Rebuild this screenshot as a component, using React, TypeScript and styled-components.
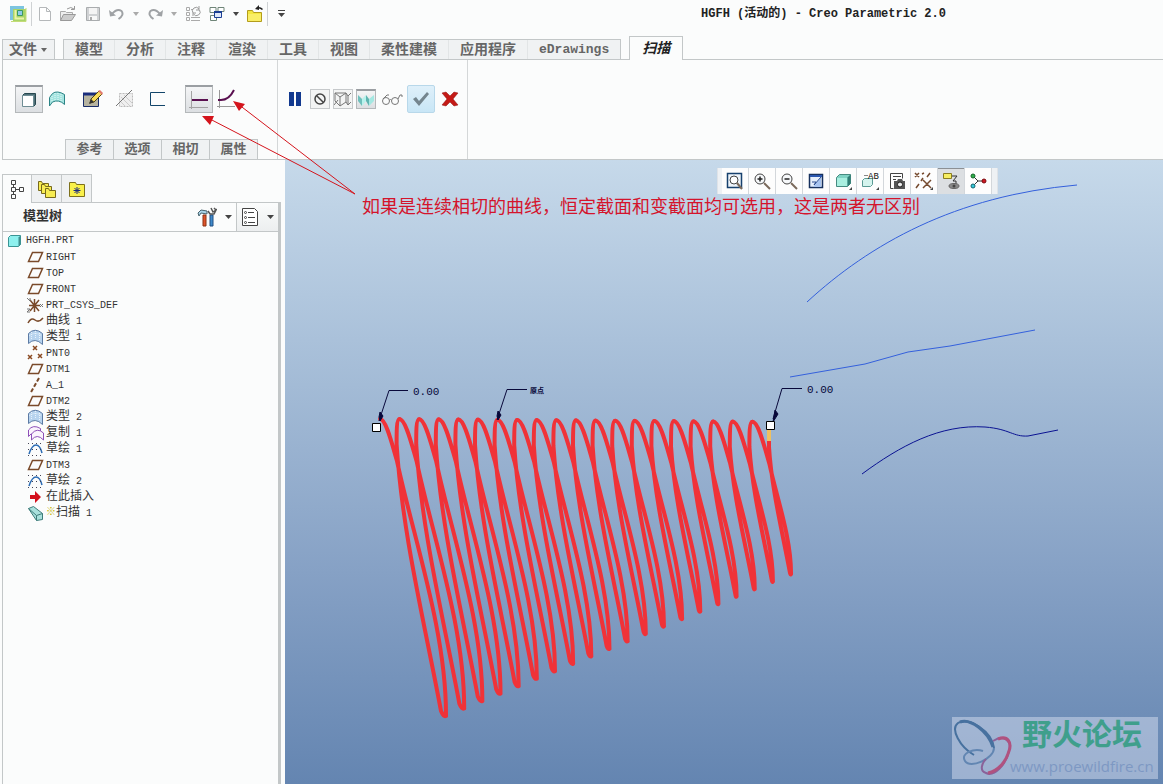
import React from "react";
import styled, { createGlobalStyle, css } from "styled-components";

const GlobalStyle = createGlobalStyle`
  *, *::before, *::after { box-sizing: border-box; }
  body {
    margin: 0;
    background: #fbfcfc;
    color: #333;
    font-family: "Liberation Mono", "Noto Sans CJK SC", monospace;
    font-size: 12px;
    line-height: 16px;
  }
  button { font: inherit; color: inherit; cursor: default; }
  svg { display: block; flex: none; }
`;

const line = "#c3c7c8";

const Page = styled.div`
  position: relative;
  display: flex;
  flex-direction: column;
  min-height: 100vh;
`;

/* ---------- title bar ---------- */
const TitleBar = styled.header`
  display: flex;
  align-items: center;
  height: 28px;
  padding-left: 8px;
`;
const QuickButton = styled.button<{ $w: number }>`
  display: flex;
  align-items: center;
  justify-content: center;
  width: ${(p) => p.$w}px;
  height: 24px;
  padding: 0;
  border: 0;
  background: none;
`;
const QuickRule = styled.span<{ $gap?: number }>`
  width: 1px;
  height: 24px;
  margin: 0 ${(p) => p.$gap ?? 0}px;
  background: #cfd2d4;
`;
const Title = styled.h1`
  flex: 1;
  margin: 0;
  padding-left: 190px;
  text-align: center;
  font-size: 12px;
  line-height: 16px;
  font-weight: bold;
  color: #222;
  white-space: nowrap;
`;

/* ---------- ribbon tabs ---------- */
const TabBar = styled.nav`
  display: flex;
  align-items: flex-end;
  height: 24px;
  margin: 8px 0 0 2px;
  border-bottom: 1px solid ${line};
`;
const tabFace = css`
  border: 1px solid ${line};
  background: #f0f2f3;
  color: #666;
  font-weight: bold;
`;
const FileTab = styled.button`
  ${tabFace}
  display: flex;
  align-items: center;
  gap: 4px;
  height: 20px;
  width: 53px;
  margin-right: 8px;
  padding: 0 6px;
  border-bottom: 0;
  font-size: 14px;
  white-space: nowrap;
`;
const TabGroup = styled.div`
  ${tabFace}
  display: flex;
  height: 20px;
  border-bottom: 0;
`;
const Tab = styled.button`
  height: 19px;
  padding: 0 11px;
  border: 0;
  border-right: 1px solid #e2e5e6;
  background: none;
  font-size: 14px;
  line-height: 20px;
  white-space: nowrap;
  &:last-child { border-right: 0; font-size: 13px; }
`;
const ActiveTab = styled.button`
  height: 24px;
  width: 54px;
  margin: 0 0 -1px 8px;
  padding: 0;
  border: 1px solid ${line};
  border-bottom: 0;
  background: #fbfcfc;
  color: #222;
  font-size: 14px;
  font-weight: bold;
  font-style: italic;
`;

/* ---------- ribbon ---------- */
const Ribbon = styled.section`
  display: flex;
  height: 100px;
  margin-left: 2px;
  border-left: 1px solid ${line};
  border-bottom: 1px solid ${line};
`;
const RibbonGroup = styled.div<{ $w: number }>`
  display: flex;
  flex-direction: column;
  justify-content: space-between;
  width: ${(p) => p.$w}px;
  padding-top: 25px;
  border-right: 1px solid #d4d7d8;
`;
const ToolRow = styled.div<{ $start: number }>`
  display: flex;
  align-items: center;
  height: 28px;
  padding-left: ${(p) => p.$start}px;
`;
const Tool = styled.button<{ $face?: "pressed" | "hot" | "flat"; $size?: number; $gap?: number }>`
  display: flex;
  align-items: center;
  justify-content: center;
  width: ${(p) => p.$size ?? 28}px;
  height: ${(p) => p.$size ?? 28}px;
  margin-left: ${(p) => p.$gap ?? 0}px;
  padding: 0;
  border: 0;
  background: none;
  ${(p) => p.$face === "pressed" && css`
    border: 1px solid #b4b8ba;
    border-top: 2px solid #9a9ea2;
    background: linear-gradient(#f4f5f6, #dcdfe2);
  `}
  ${(p) => p.$face === "hot" && css`
    border: 1px solid #b8d8ea;
    border-radius: 2px;
    background: linear-gradient(#dff0fa, #c8e6f6);
  `}
  ${(p) => p.$face === "flat" && css`
    border: 1px solid #c6c9cb;
    background: #f3f4f4;
  `}
`;
const SubTabs = styled.div`
  display: flex;
  padding-left: 62px;
`;
const SubTab = styled.button`
  ${tabFace}
  width: 49px;
  height: 20px;
  margin-right: -1px;
  padding: 0;
  border-bottom: 0;
  font-size: 13px;
  line-height: 19px;
`;

/* ---------- work area ---------- */
const Work = styled.div`
  display: flex;
  flex: 1;
`;
const Side = styled.aside`
  display: flex;
  flex-direction: column;
  width: 285px;
  padding: 14px 4px 0 2px;
`;
const SideTabs = styled.div`
  display: flex;
  height: 28px;
`;
const SideTab = styled.button<{ $on?: boolean }>`
  display: flex;
  align-items: center;
  justify-content: center;
  width: 30px;
  height: ${(p) => (p.$on ? 29 : 28)}px;
  padding: 0;
  border: 1px solid ${line};
  border-bottom: 0;
  border-left-width: ${(p) => (p.$on ? 1 : 0)}px;
  background: ${(p) => (p.$on ? "#fbfcfc" : "#eff1f2")};
  z-index: 1;
`;
const SidePanel = styled.div`
  flex: 1;
  border: 1px solid ${line};
  border-right: 3px solid #c3c7c8;
  border-bottom: 0;
`;
const SideHead = styled.div`
  display: flex;
  align-items: center;
  height: 29px;
  border-bottom: 1px solid ${line};
`;
const SideTitle = styled.h2`
  flex: 1;
  margin: 0;
  padding-left: 20px;
  font-size: 13px;
  line-height: 16px;
  color: #333;
`;
const HeadButton = styled.button<{ $framed?: boolean }>`
  display: flex;
  align-items: center;
  gap: 8px;
  height: 28px;
  padding: 0 4px;
  border: 0;
  background: none;
  ${(p) => p.$framed && css`
    border-left: 1px solid ${line};
    background: linear-gradient(#fbfcfc, #eceeef);
  `}
`;
const Tree = styled.ul`
  margin: 0;
  padding: 1px 0 0;
  list-style: none;
`;
const Node = styled.li<{ $root?: boolean }>`
  display: flex;
  align-items: center;
  gap: 1px;
  height: 16px;
  padding-left: ${(p) => (p.$root ? 4 : 24)}px;
  color: #333;
  white-space: pre;
`;
const Latin = styled.span`
  font-size: 10px;
`;
const Mark = styled.span`
  width: 9px;
  font-size: 10px;
  font-weight: bold;
  color: #c4b400;
`;

/* ---------- graphics window ---------- */
const Viewport = styled.main`
  position: relative;
  flex: 1;
  overflow: hidden;
  background: linear-gradient(#c6d9ea 0%, #a3bbd6 36%, #86a1c5 66%, #6485b1 100%);
`;
const Drawing = styled.svg`
  position: absolute;
  left: 0;
  top: 0;
`;
const ViewBar = styled.div`
  position: absolute;
  left: 432px;
  top: 8px;
  display: flex;
  height: 26px;
  padding: 0 5px 0 4px;
  background: #eef1f4;
  border: 1px solid #dfe3e8;
  border-width: 0 1px;
`;
const ViewButton = styled.button<{ $on?: boolean }>`
  display: flex;
  align-items: center;
  justify-content: center;
  width: 27px;
  padding: 0;
  border: 0;
  border-right: 1px solid #d3d7db;
  background: ${(p) => (p.$on ? "#dcdfe2" : "#fdfdfd")};
  box-shadow: ${(p) => (p.$on ? "inset 0 1px 0 #8c9094" : "none")};
`;
const Note = styled.p`
  position: absolute;
  left: 77px;
  top: 36px;
  margin: 0;
  font-size: 18px;
  line-height: 24px;
  color: #d4142c;
  white-space: nowrap;
`;
const Watermark = styled.div`
  position: absolute;
  right: 5px;
  bottom: 5px;
  display: flex;
  width: 206px;
  height: 62px;
  background: rgba(214, 222, 240, 0.5);
`;
const MarkText = styled.div`
  margin-left: -2px;
  white-space: nowrap;
`;
const MarkName = styled.div`
  padding-left: 12px;
  font-size: 30px;
  line-height: 40px;
  font-weight: bold;
  color: #3f9f8c;
`;
const MarkUrl = styled.div`
  font-family: "Open Sans", sans-serif;
  font-size: 15px;
  line-height: 18px;
  color: #7d98c3;
`;
const Leaders = styled.svg`
  position: absolute;
  left: 0;
  top: 0;
  pointer-events: none;
`;

/* ---------- icons ---------- */
type IconProps = { w?: number; h?: number; children: React.ReactNode };
const Icon = ({ w = 18, h = 18, children }: IconProps) => (
  <svg width={w} height={h} viewBox={`0 0 ${w} ${h}`} fill="none" aria-hidden="true">{children}</svg>
);
const Caret = ({ color = "#444", w = 7 }: { color?: string; w?: number }) => (
  <Icon w={w} h={4}><path d={`M0 0H${w}L${w / 2} 4Z`} fill={color} /></Icon>
);

const AppIcon = () => (
  <Icon>
    <rect x="1" y="1" width="14" height="14" fill="#6db8dc" />
    <path d="M4 4h13v13H4z" fill="#a8d468" />
    <path d="M1 1h14v3H4v11H1z" fill="#7cc4e0" />
    <path d="M6.500 5v8.500H15" stroke="#eaf3a8" strokeWidth="2" />
    <path d="M8.500 5.500h5v5h-5z" fill="#8fc8e8" stroke="#3a9a60" />
    <path d="M2 16.500h15V3" stroke="#c4dc78" />
  </Icon>
);
const NewIcon = () => (
  <Icon w={14} h={16}><path d="M1.500 1.500h7l4 4v9h-11zM8.500 1.500v4h4" fill="#fff" stroke="#b5b8ba" /></Icon>
);
const OpenIcon = () => (
  <Icon>
    <path d="M1.500 15.500v-9h5l1 1h6v2" fill="#eee" stroke="#aaa" />
    <path d="M1.500 15.500l3-6h12l-4 6z" fill="#ccc" stroke="#999" />
    <path d="M8 4q4-3 7 0M15.500 1v3.500H12" stroke="#999" />
  </Icon>
);
const SaveIcon = () => (
  <Icon w={16} h={16}>
    <path d="M1.500 1.500h13v13h-13z" fill="#d0d2d4" stroke="#a9acae" />
    <path d="M4 2h8v6H4z" fill="#f4f4f4" /><path d="M4 10h8v4H4z" fill="#f8f8f8" /><path d="M5 11h2v3H5z" fill="#aaa" />
  </Icon>
);
const UndoIcon = ({ flip }: { flip?: boolean }) => (
  <Icon w={16} h={14}>
    <g transform={flip ? "matrix(-1 0 0 1 16 0)" : undefined}>
      <path d="M3 7Q8 1 12.500 4Q15.500 8 9.500 12" stroke="#9fa2a5" strokeWidth="2" />
      <path d="M0 3l1 6.500 6-1z" fill="#9fa2a5" />
    </g>
  </Icon>
);
const RegenIcon = () => (
  <Icon w={16} h={16}>
    <path d="M1.500 1.500h3v3h-3zM1.500 6.500h3v3h-3zM1.500 11.500h3v3h-3zM6 11.500h9M6 14.500h9M6 3.500h2" stroke="#aaa" />
    <path d="M8 7a3.500 3.500 0 0 1 6-4M14.500 4a3.500 3.500 0 0 1-6 4M14 0v4h-3M8 10V7h3" stroke="#999" />
  </Icon>
);
const WindowsIcon = () => (
  <Icon w={16} h={16}>
    <path d="M1 1.500h6v5H1zM9 1.500h6v4H9zM1.500 9.500h6v5h-6z" fill="#fff" stroke="#6f8578" />
    <path d="M5.500 5.500h7v6h-7z" fill="#dfe8fa" stroke="#1c3f94" />
    <path d="M5 6h8" stroke="#1c3f94" strokeWidth="2" />
  </Icon>
);
const CloseFolderIcon = () => (
  <Icon>
    <path d="M1.500 5.500h5l1 2h8v9h-14z" fill="#f3e63e" stroke="#b39c1c" />
    <path d="M2 9h13v7H2z" fill="#f9ee66" />
    <path d="M10.500 3.500q3-2 6 1" stroke="#222" strokeWidth="1.500" />
    <path d="M9 4l4-4v5z" fill="#222" />
  </Icon>
);
const OptionsIcon = () => (
  <Icon w={9} h={8}><path d="M1 .5h7" stroke="#444" /><path d="M1 3h7L4.500 7z" fill="#444" /></Icon>
);

const SolidIcon = () => (
  <Icon>
    <path d="M2.500 4.500l2-2h11v11l-2 2" fill="#4e7078" stroke="#284850" />
    <path d="M2.500 4.500h11v11h-11z" fill="#fff" stroke="#6f8d94" />
  </Icon>
);
const SurfaceIcon = () => (
  <Icon>
    <path d="M4.500 3.500Q9 0 16.500 4.500V14.500Q11 9 4.500 12L1.500 16V7.500Z" fill="#a5e4e0" stroke="#2c8486" />
    <path d="M4 6v6M7 3v8M10 3v8M13 4v8" stroke="#e6fbf8" strokeDasharray="1 1" />
  </Icon>
);
const SketchIcon = () => (
  <Icon w={22} h={20}>
    <path d="M1.500 4.500h15v13h-15z" fill="#b6b3a0" stroke="#182c68" /><path d="M1 5h16" stroke="#1a2d7c" strokeWidth="3" />
    <path d="M8 14l1-4 8-8 3 3-8 8z" fill="#f6da5a" stroke="#51430f" /><path d="M7 15l2-5 3 3z" fill="#333" />
    <path d="M16 2l2-1 3 3-1 2z" fill="#e27a6e" />
  </Icon>
);
const RemoveIcon = () => (
  <Icon w={20} h={20}>
    <path d="M4.500 4.500h13v13h-13z" stroke="#bbb" fill="#efefef" strokeDasharray="2 1" />
    <path d="M6 8l9 9M9 6l8 8M5 12l5 5" stroke="#ccc" /><path d="M1 17L17 1" stroke="#777" />
  </Icon>
);
const ThinIcon = () => (
  <Icon w={18} h={18}><path d="M17 2.500H2.500v13H17" stroke="#12456a" /></Icon>
);
const ConstIcon = () => (
  <Icon w={20} h={20}><path d="M2.500 1v18M0 17.500h19" stroke="#a3a3a3" /><path d="M3 10h16" stroke="#5a1050" strokeWidth="2" /></Icon>
);
const VarIcon = () => (
  <Icon w={20} h={20}><path d="M2.500 1v18M0 17.500h18" stroke="#999" /><path d="M1 11h3Q12 11 17 1" stroke="#5a1050" strokeWidth="2" /></Icon>
);
const PauseIcon = () => (
  <Icon w={12} h={14}><path d="M0 0h5v14H0zM7 0h5v14H7z" fill="#12398f" /></Icon>
);
const NoPreviewIcon = () => (
  <Icon w={14} h={14}><circle cx="7" cy="7" r="5" stroke="#444" strokeWidth="1.500" /><path d="M3.500 3.500l7 7" stroke="#444" strokeWidth="1.500" /></Icon>
);
const WireIcon = () => (
  <Icon>
    <path d="M1 3l5 4v9L1 11zM6 7l6-4v9l-6 4M12 3l2 3 3-3M14 6v9l3-3M12 12l2 3M1 3h11M0 15l4-5" stroke="#777" />
  </Icon>
);
const ShadeIcon = () => (
  <Icon>
    <path d="M1 4l4 4v7l-4-5z" fill="#6fc0bc" /><path d="M5 8l4-4v6l-4 5z" fill="#b8f2ec" />
    <path d="M9 4l3 4v7l-3-5z" fill="#5fb4b0" /><path d="M12 8l5-4v6l-5 5z" fill="#a4e8e2" />
  </Icon>
);
const GlassesIcon = () => (
  <Icon w={22} h={14}>
    <circle cx="5" cy="9" r="3.500" stroke="#777" /><circle cx="14" cy="9" r="3.500" stroke="#777" />
    <path d="M8.500 8q1-1 2 0M2 7l4-4 2 0M17 7l2-4h2v2" stroke="#777" />
  </Icon>
);
const CheckIcon = () => (
  <Icon w={20} h={18}><path d="M2 9l3-2 3 4 8-9 2 2L8 16z" fill="#74858e" /></Icon>
);
const CrossIcon = () => (
  <Icon w={18} h={18}><path d="M1 3l4-1 4 4 4-4 4 1-5 6 5 6-4 1-4-4-4 4-4-1 5-6z" fill="#c41a16" stroke="#8f120e" strokeWidth=".5" /></Icon>
);

const TreeTabIcon = () => (
  <Icon w={16} h={20}><path d="M2.500 1.500h4v4h-4zM2.500 8.500h4v4h-4zM2.500 15.500h4v4h-4zM10.500 8.500h4v4h-4zM4.500 5.500v3M4.500 12.500v3M6.500 10.500h4" stroke="#444" /></Icon>
);
const FoldersIcon = () => (
  <Icon w={20} h={20}>
    {[0, 3, 7].map((o) => (
      <path key={o} d={`M${o + 1.5} ${o + 2.5}h3l1 2h6v7h-10z`} fill="#f7ec52" stroke="#77691c" />
    ))}
  </Icon>
);
const FavIcon = () => (
  <Icon w={18} h={16}>
    <path d="M1.500 1.500h6l1 2h8v12h-15z" fill="#f9f04a" stroke="#7d701c" />
    <path d="M9 6v7M5.500 9.500h7M6.500 7l5 5M11.500 7l-5 5" stroke="#1a2a80" />
  </Icon>
);
const ToolsIcon = () => (
  <Icon w={20} h={20}>
    <path d="M1 6l3-3 6 1v3L4 6 2 9z" fill="#a9d4e8" stroke="#47636e" />
    <path d="M6 8h3v11H6z" fill="#e0542a" stroke="#8b3012" />
    <path d="M13 8h3v11h-3z" fill="#3e8acb" stroke="#224f80" />
    <path d="M11 4l2 3h4l2-4-3 2-2-4M17 1l2 2" stroke="#555" strokeWidth="1.500" />
  </Icon>
);
const ListIcon = () => (
  <Icon w={18} h={20}>
    <path d="M1.500 1.500h12l3 3v14h-15z" fill="#fff" stroke="#444" />
    <path d="M7 5.500h6M7 10.500h7M7 15.500h7" stroke="#444" />
    <circle cx="4.500" cy="5.500" r="1" stroke="#444" /><circle cx="4.500" cy="10.500" r="1" stroke="#444" /><circle cx="4.500" cy="15.500" r="1" stroke="#444" />
  </Icon>
);

type Kind = "part" | "plane" | "csys" | "curve" | "surf" | "points" | "axis" | "copy" | "sketch" | "insert" | "sweep";
const nodeArt: Record<Kind, React.ReactNode> = {
  part: (<><path d="M1.500 4.500l2-2h10v9l-2 2h-10z" fill="#8df0ee" stroke="#3a9494" /><path d="M11.500 4.500l2-2v9l-2 2z" fill="#3f8f90" /></>),
  plane: <path d="M5.500 3.500h10l-4 9h-10z" stroke="#7a4a2a" strokeWidth="1.500" />,
  csys: (<><path d="M2 8.500h11M7.500 2v13M3 3l9 11M12 3L3 14" stroke="#7a4a2a" strokeWidth="1.500" /><path d="M0 1l3 3M3 1v3M13 7l3 3M16 7l-3 3M0 12h3l-3 3h3" stroke="#777" /></>),
  curve: <path d="M1 10Q4 4 8 7t8-2" stroke="#7a4a2a" strokeWidth="1.500" />,
  surf: (<><path d="M1.500 4.500Q8-2 15.500 4.500V15.500Q8 8 1.500 14.500z" fill="#b7d3ee" stroke="#5c7ba4" /><path d="M4.500 3v8M8.500 2v8M12.500 4v8M2 7q6-5 13 0" stroke="#e9f3fc" strokeDasharray="1 1" /></>),
  points: <path d="M6 1l4 4M10 1L6 5M1 10l4 4M5 10l-4 4M11 9l4 4M15 9l-4 4" stroke="#8a4a22" strokeWidth="1.500" />,
  axis: <path d="M12 1L4 15" stroke="#7a4a2a" strokeWidth="2" strokeDasharray="4 2" />,
  copy: (<><path d="M1.500 11.500V5Q6-1 13.500 3.500V6" stroke="#8d50b8" fill="#faf4fd" /><path d="M1.500 11.500l3-3M4.500 15V9Q10 2 16.500 8v7Q10 8 4.500 15z" stroke="#8d50b8" fill="#faf4fd" /></>),
  sketch: (<><path d="M2 13Q5 4 9 4t6 8" stroke="#2c6cb4" strokeWidth="1.500" /><path d="M1 2.500h15M1 8.500h15M1 14.500h15" stroke="#445" strokeDasharray="1 3" /></>),
  insert: <path d="M3 6h5V2l6 6-6 6v-4H3z" fill="#d3101c" />,
  sweep: (<><path d="M1.500 3.500l5-2 9 7v6l-6 1z" fill="#a9e0dc" stroke="#3d7c7a" /><path d="M1.500 3.500l8 7 6-2M9.500 10.500v5" stroke="#3d7c7a" /></>),
};
type Item = { kind: Kind; cjk?: string; latin?: string; mark?: boolean };
const items: Item[] = [
  { kind: "plane", latin: "RIGHT" },
  { kind: "plane", latin: "TOP" },
  { kind: "plane", latin: "FRONT" },
  { kind: "csys", latin: "PRT_CSYS_DEF" },
  { kind: "curve", cjk: "曲线", latin: " 1" },
  { kind: "surf", cjk: "类型", latin: " 1" },
  { kind: "points", latin: "PNT0" },
  { kind: "plane", latin: "DTM1" },
  { kind: "axis", latin: "A_1" },
  { kind: "plane", latin: "DTM2" },
  { kind: "surf", cjk: "类型", latin: " 2" },
  { kind: "copy", cjk: "复制", latin: " 1" },
  { kind: "sketch", cjk: "草绘", latin: " 1" },
  { kind: "plane", latin: "DTM3" },
  { kind: "sketch", cjk: "草绘", latin: " 2" },
  { kind: "insert", cjk: "在此插入" },
  { kind: "sweep", cjk: "扫描", latin: " 1", mark: true },
];

const Lens = ({ sign }: { sign?: string }) => (
  <Icon><circle cx="7" cy="7" r="5" stroke="#444" fill="#f6f8fa" /><path d="M11 11l6 6" stroke="#7a6a5c" strokeWidth="2" /><path d={sign} stroke="#222" strokeWidth="1.500" /></Icon>
);
const corner = <path d="M19 16v3h-3z" fill="#444" />;
const viewTools: { name: string; on?: boolean; art: React.ReactNode }[] = [
  { name: "重新调整", art: <Icon><path d="M1.500 1.500h14v14h-14z" stroke="#17416e" strokeWidth="1.500" fill="#eef4fa" /><circle cx="8" cy="8" r="4" stroke="#444" fill="#fff" /><path d="M11 11l5 6" stroke="#7a6a5c" strokeWidth="2" /></Icon> },
  { name: "放大", art: <Lens sign="M4.500 7h5M7 4.500v5" /> },
  { name: "缩小", art: <Lens sign="M4.500 7h5" /> },
  { name: "重画", art: <Icon w={16} h={16}><path d="M1.500 1.500h13v13h-13z" stroke="#17315e" strokeWidth="1.500" fill="#e6effc" /><path d="M2 3h12" stroke="#2a57b0" strokeWidth="2" /><path d="M5 14l8-10v10z" fill="#a8c4f0" /><path d="M4 9h4l-2 3 7-8" stroke="#2a4d90" /></Icon> },
  { name: "显示样式", art: <Icon w={20} h={20}><path d="M3.500 6.500l3-3h11v9l-3 3h-11z" fill="#7fd3c4" stroke="#468a80" /><path d="M4 7h10v8H4z" fill="#a9efe0" /><path d="M14.500 6.500l3-3v9l-3 3z" fill="#2f7d74" />{corner}</Icon> },
  { name: "已命名视图", art: <Icon w={20} h={20}><path d="M2.500 9.500l2-2h8v6l-2 2h-8z" fill="#d5f4ee" stroke="#5a9a94" /><path d="M4 4.500h4" stroke="#888" /><text x="8" y="8" fontSize="9" fontFamily="Liberation Mono" fill="#111">AB</text>{corner}</Icon> },
  { name: "视图管理器", art: <Icon><path d="M2.500 16.500v-15h12v5M2.500 16.500h3M5 4.500h8M5 7.500h3" stroke="#444" /><path d="M6 9h3l1-2h4l1 2h2v8H6z" fill="#555" /><circle cx="12" cy="12.500" r="2.500" fill="#eee" stroke="#222" /></Icon> },
  { name: "基准显示", art: <Icon w={20} h={20}><path d="M1 2l4 4M5 2L1 6M8 3l2-1M2 17l3-4M7 10l2-3M9 9l8 8M17 9l-8 8M13 6l3-4" stroke="#754a2e" strokeWidth="1.500" />{corner}</Icon> },
  { name: "注释显示", on: true, art: <Icon><path d="M1.500 1.500h8v5h-8z" fill="#f6ee62" stroke="#8a7d20" /><path d="M10 4h5l-4 5h3v3" stroke="#333" /><ellipse cx="12" cy="14" rx="5" ry="2.500" fill="#888" stroke="#666" /><circle cx="12" cy="14" r="1.500" fill="#444" /></Icon> },
  { name: "旋转中心", art: <Icon><path d="M4 4l5 5-5 5M9 9h6" stroke="#333" /><circle cx="4" cy="4" r="2" fill="#2fb04a" stroke="#14642a" /><circle cx="4" cy="14" r="2" fill="#35c9d8" stroke="#146470" /><circle cx="15" cy="9" r="2" fill="#cf1720" stroke="#7a0a10" /></Icon> },
];

/* ---------- spring geometry ---------- */
const coils = Array.from({ length: 20 }, (_, i) => {
  const px = 95 + 19.6 * i;
  const py = 259 + 0.15 * i;
  const bx = 161 + 18.16 * i;
  const by = 556 - 7.47 * i;
  const sx = px + 17;
  const sy = py + 42;
  const d = bx - sx;
  const h = by - sy;
  const down = `M${px} ${py}C${px + 6} ${py} ${px + 12} ${py + 25} ${sx} ${sy}C${sx + 0.33 * d} ${sy + 0.3 * h} ${sx + 1.01 * d} ${sy + 0.67 * h} ${bx} ${by}`;
  const qx = px + 19.6;
  const tx = qx - 3;
  const ty = py + 25;
  const e = Math.max(1, 5 - i * 0.25);
  const d2 = bx - e - tx;
  const h2 = by - e - ty;
  const start = i === 19 ? `M${tx} ${py + 16}L${tx} ${ty}` : `M${qx} ${py}C${qx - 3} ${py} ${tx} ${ty - 12} ${tx} ${ty}`;
  const up = `${start}C${tx + 0.12 * d2} ${ty + 0.33 * h2} ${tx + 0.63 * d2} ${ty + 0.67 * h2} ${bx - e} ${by - e}Q${bx - e / 2} ${by + 1} ${bx} ${by}`;
  return down + up;
});

const ribbonTabs = ["模型", "分析", "注释", "渲染", "工具", "视图", "柔性建模", "应用程序", "eDrawings"];

export default function App() {
  return (
    <>
      <GlobalStyle />
      <Page>
        <TitleBar>
          <QuickButton $w={20} aria-label="Creo"><AppIcon /></QuickButton>
          <QuickRule $gap={3} />
          <QuickButton $w={20} aria-label="新建"><NewIcon /></QuickButton>
          <QuickButton $w={26} aria-label="打开"><OpenIcon /></QuickButton>
          <QuickButton $w={24} aria-label="保存"><SaveIcon /></QuickButton>
          <QuickButton $w={24} aria-label="撤消"><UndoIcon /></QuickButton>
          <QuickButton $w={14} aria-label="撤消列表"><Caret color="#aaa" w={6} /></QuickButton>
          <QuickButton $w={24} aria-label="重做"><UndoIcon flip /></QuickButton>
          <QuickButton $w={14} aria-label="重做列表"><Caret color="#aaa" w={6} /></QuickButton>
          <QuickButton $w={24} aria-label="重新生成"><RegenIcon /></QuickButton>
          <QuickButton $w={24} aria-label="窗口"><WindowsIcon /></QuickButton>
          <QuickButton $w={14} aria-label="窗口列表"><Caret w={6} /></QuickButton>
          <QuickButton $w={24} aria-label="关闭"><CloseFolderIcon /></QuickButton>
          <QuickRule />
          <QuickButton $w={26} aria-label="自定义"><OptionsIcon /></QuickButton>
          <Title>HGFH (活动的) - Creo Parametric 2.0</Title>
        </TitleBar>

        <TabBar>
          <FileTab>文件<Caret color="#666" w={6} /></FileTab>
          <TabGroup>{ribbonTabs.map((t) => <Tab key={t}>{t}</Tab>)}</TabGroup>
          <ActiveTab>扫描</ActiveTab>
        </TabBar>

        <Ribbon>
          <RibbonGroup $w={275}>
            <ToolRow $start={12}>
              <Tool $face="pressed" aria-label="实体"><SolidIcon /></Tool>
              <Tool aria-label="曲面"><SurfaceIcon /></Tool>
              <Tool $gap={8} aria-label="草绘"><SketchIcon /></Tool>
              <Tool $gap={4} aria-label="移除材料"><RemoveIcon /></Tool>
              <Tool $gap={4} aria-label="薄板"><ThinIcon /></Tool>
              <Tool $gap={14} $face="pressed" aria-label="恒定截面"><ConstIcon /></Tool>
              <Tool aria-label="可变截面"><VarIcon /></Tool>
            </ToolRow>
            <SubTabs>
              {["参考", "选项", "相切", "属性"].map((t) => <SubTab key={t}>{t}</SubTab>)}
            </SubTabs>
          </RibbonGroup>
          <RibbonGroup $w={190}>
            <ToolRow $start={3}>
              <Tool aria-label="暂停"><PauseIcon /></Tool>
              <Tool $size={20} $gap={1} $face="flat" aria-label="无预览"><NoPreviewIcon /></Tool>
              <Tool $size={20} $gap={3} $face="flat" aria-label="分离"><WireIcon /></Tool>
              <Tool $size={20} $gap={3} $face="pressed" aria-label="连接"><ShadeIcon /></Tool>
              <Tool $size={20} $gap={6} aria-label="预览"><GlassesIcon /></Tool>
              <Tool $gap={5} $face="hot" aria-label="确定"><CheckIcon /></Tool>
              <Tool $gap={1} aria-label="取消"><CrossIcon /></Tool>
            </ToolRow>
          </RibbonGroup>
        </Ribbon>

        <Work>
          <Side>
            <SideTabs>
              <SideTab $on aria-label="模型树"><TreeTabIcon /></SideTab>
              <SideTab aria-label="文件夹浏览器"><FoldersIcon /></SideTab>
              <SideTab aria-label="收藏夹"><FavIcon /></SideTab>
            </SideTabs>
            <SidePanel>
              <SideHead>
                <SideTitle>模型树</SideTitle>
                <HeadButton aria-label="设置"><ToolsIcon /><Caret /></HeadButton>
                <HeadButton $framed aria-label="显示"><ListIcon /><Caret /></HeadButton>
              </SideHead>
              <Tree>
                <Node $root><Icon h={16}>{nodeArt.part}</Icon><Latin>HGFH.PRT</Latin></Node>
                {items.map((n, i) => (
                  <Node key={i}>
                    <Icon h={16}>{nodeArt[n.kind]}</Icon>
                    {n.mark && <Mark>※</Mark>}
                    <span>{n.cjk}<Latin>{n.latin}</Latin></span>
                  </Node>
                ))}
              </Tree>
            </SidePanel>
          </Side>

          <Viewport>
            <Drawing width="878" height="624" viewBox="0 0 878 624" fill="none">
              <g stroke="#3460dc">
                <path d="M522 142C585 84 670 36 792 25" />
                <path d="M505 217L580 204L623 192L665 186L750 170" />
              </g>
              <path d="M577 314C615 286 655 264 700 267C725 269 728 277 743 276L773 270" stroke="#0a1292" />
              <g stroke="#f03238" strokeWidth="4" strokeLinejoin="round" strokeLinecap="round">
                {coils.map((d, i) => <path key={i} d={d} />)}
              </g>
              <path d="M484 268v13" stroke="#f0c060" strokeWidth="4" />
              <g stroke="#08083a">
                <path d="M123 230.500H104L94 261M242 229.500H222L212 260M517 228.500H497L488 259" />
                <path d="M95 252l3 4-3 5-1-4zM213 251l3 4-3 5-1-4zM490 250l3 4-5 8z" fill="#08083a" />
              </g>
              <path d="M87.500 263.500h8v8h-8zM481.500 261.500h8v8h-8z" fill="#fff" stroke="#000" />
              <g fill="#08083a" fontSize="11" fontFamily="Liberation Mono, monospace">
                <text x="128" y="235">0.00</text>
                <text x="522" y="233">0.00</text>
                <text x="245" y="233" fontSize="7" fontWeight="bold" fontFamily="Noto Sans CJK SC, sans-serif">原点</text>
              </g>
            </Drawing>
            <ViewBar>
              {viewTools.map((v) => <ViewButton key={v.name} $on={v.on} aria-label={v.name}>{v.art}</ViewButton>)}
            </ViewBar>
            <Note>如果是连续相切的曲线，恒定截面和变截面均可选用，这是两者无区别</Note>
            <Watermark>
              <Icon w={60} h={62}>
                <path d="M22 38C8 30-2 12 6 6C16-1 40 14 42 31" stroke="#47719f" strokeWidth="2" />
                <path d="M8 5C18 1 36 14 41 30" stroke="#47719f" strokeWidth="3" />
                <path d="M42 31C42 42 18 52 13 44C8 36 22 31 31 34" stroke="#6286b2" strokeWidth="2" />
                <path d="M41 24C52 17 60 24 57 34C54 48 42 60 34 56C27 54 30 46 34 42" stroke="#8a6299" strokeWidth="2" />
                <path d="M46 22C56 18 60 26 57 34C54 45 46 54 36 56" stroke="#b0527f" strokeWidth="3" />
              </Icon>
              <MarkText>
                <MarkName>野火论坛</MarkName>
                <MarkUrl>www.proewildfire.cn</MarkUrl>
              </MarkText>
            </Watermark>
          </Viewport>
        </Work>

        <Leaders width="360" height="200" viewBox="0 0 360 200" fill="none" aria-hidden="true">
          <path d="M355 194L238 104M355 194L208 118" stroke="#d4141c" />
          <path d="M233 101l12 3-6 7zM202 116l12 0-4 9z" fill="#d4141c" />
        </Leaders>
      </Page>
    </>
  );
}
